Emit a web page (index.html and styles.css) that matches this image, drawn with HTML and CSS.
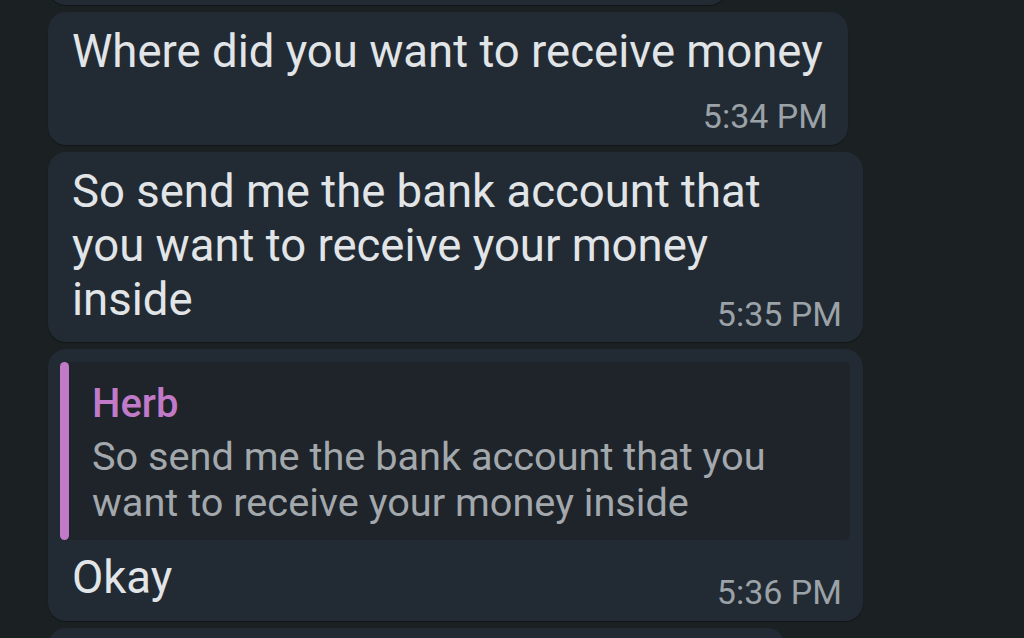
FILE: index.html
```html
<!DOCTYPE html>
<html lang="en">
<head>
  <meta charset="UTF-8" />
  <meta name="viewport" content="width=device-width, initial-scale=1.0"/>
  <title>Chat</title>
  <link rel="stylesheet" href="styles.css">
</head>
<body>
  <div class="chat">
    <div class="bubble bubble-stub bubble-prev"></div>

    <div class="bubble bubble-mid">
      <div class="text">Where did you want to receive money<span class="time">5:34 PM</span></div>
    </div>

    <div class="bubble">
      <div class="text">So send me the bank account that you want to receive your money inside<span class="time">5:35 PM</span></div>
    </div>

    <div class="bubble bubble-reply">
      <div class="reply">
        <div class="reply-bar"></div>
        <div class="reply-body">
          <div class="reply-name">Herb</div>
          <div class="reply-text">So send me the bank account that you want to receive your money inside</div>
        </div>
      </div>
      <div class="text">Okay<span class="time">5:36 PM</span></div>
    </div>

    <div class="bubble bubble-stub bubble-next"></div>
  </div>
</body>
</html>
```

FILE: styles.css
```css
body {
  font-family: Roboto, 'Noto Sans', sans-serif;
  margin: 0;
  padding: 0;
  background: #1b2022;
  overflow: hidden;
}

.chat {
  display: flex;
  flex-direction: column;
  gap: 7px;
  padding-left: 48px;
  margin-top: -35px;
}

.bubble {
  width: 815px;
  box-sizing: border-box;
  background: #222b33;
  border-radius: 18px;
  padding: 13px 30px 10px 24px;
  box-shadow: 0 1px 1px rgba(0, 0, 0, 0.35);
}

/* partly scrolled out of view */
.bubble-stub {
  height: 40px;
  padding: 0;
  flex-shrink: 0;
}

.bubble-prev {
  width: 679px;
}

.bubble-next {
  width: 737px;
}

.bubble-mid {
  width: 800px;
  padding-right: 20px;
  padding-bottom: 11px;
}

.bubble-reply {
  padding-bottom: 11px;
}

.text {
  display: flow-root;
  color: #e2e5e8;
  font-size: 45.5px;
  line-height: 54px;
}

.time {
  float: right;
  margin: 23px -9px 0 20px;
  color: #9ba2a8;
  font-size: 34px;
  line-height: 36px;
}

.bubble-mid .time {
  margin: 19px 0 0 20px;
}

.reply {
  display: flex;
  margin: 0 -17px 11px -12px;
  background: #1e242a;
  border-radius: 6px;
}

.reply-bar {
  width: 9px;
  flex-shrink: 0;
  background: #c07ac8;
  border-radius: 5px;
}

.reply-body {
  padding: 18px 12px 14px 23px;
}

.reply-name {
  color: #c07ac8;
  font-size: 40px;
  font-weight: 500;
  line-height: 47px;
}

.reply-text {
  margin-top: 7px;
  color: #a3a8ad;
  font-size: 39.7px;
  line-height: 46px;
}
```
